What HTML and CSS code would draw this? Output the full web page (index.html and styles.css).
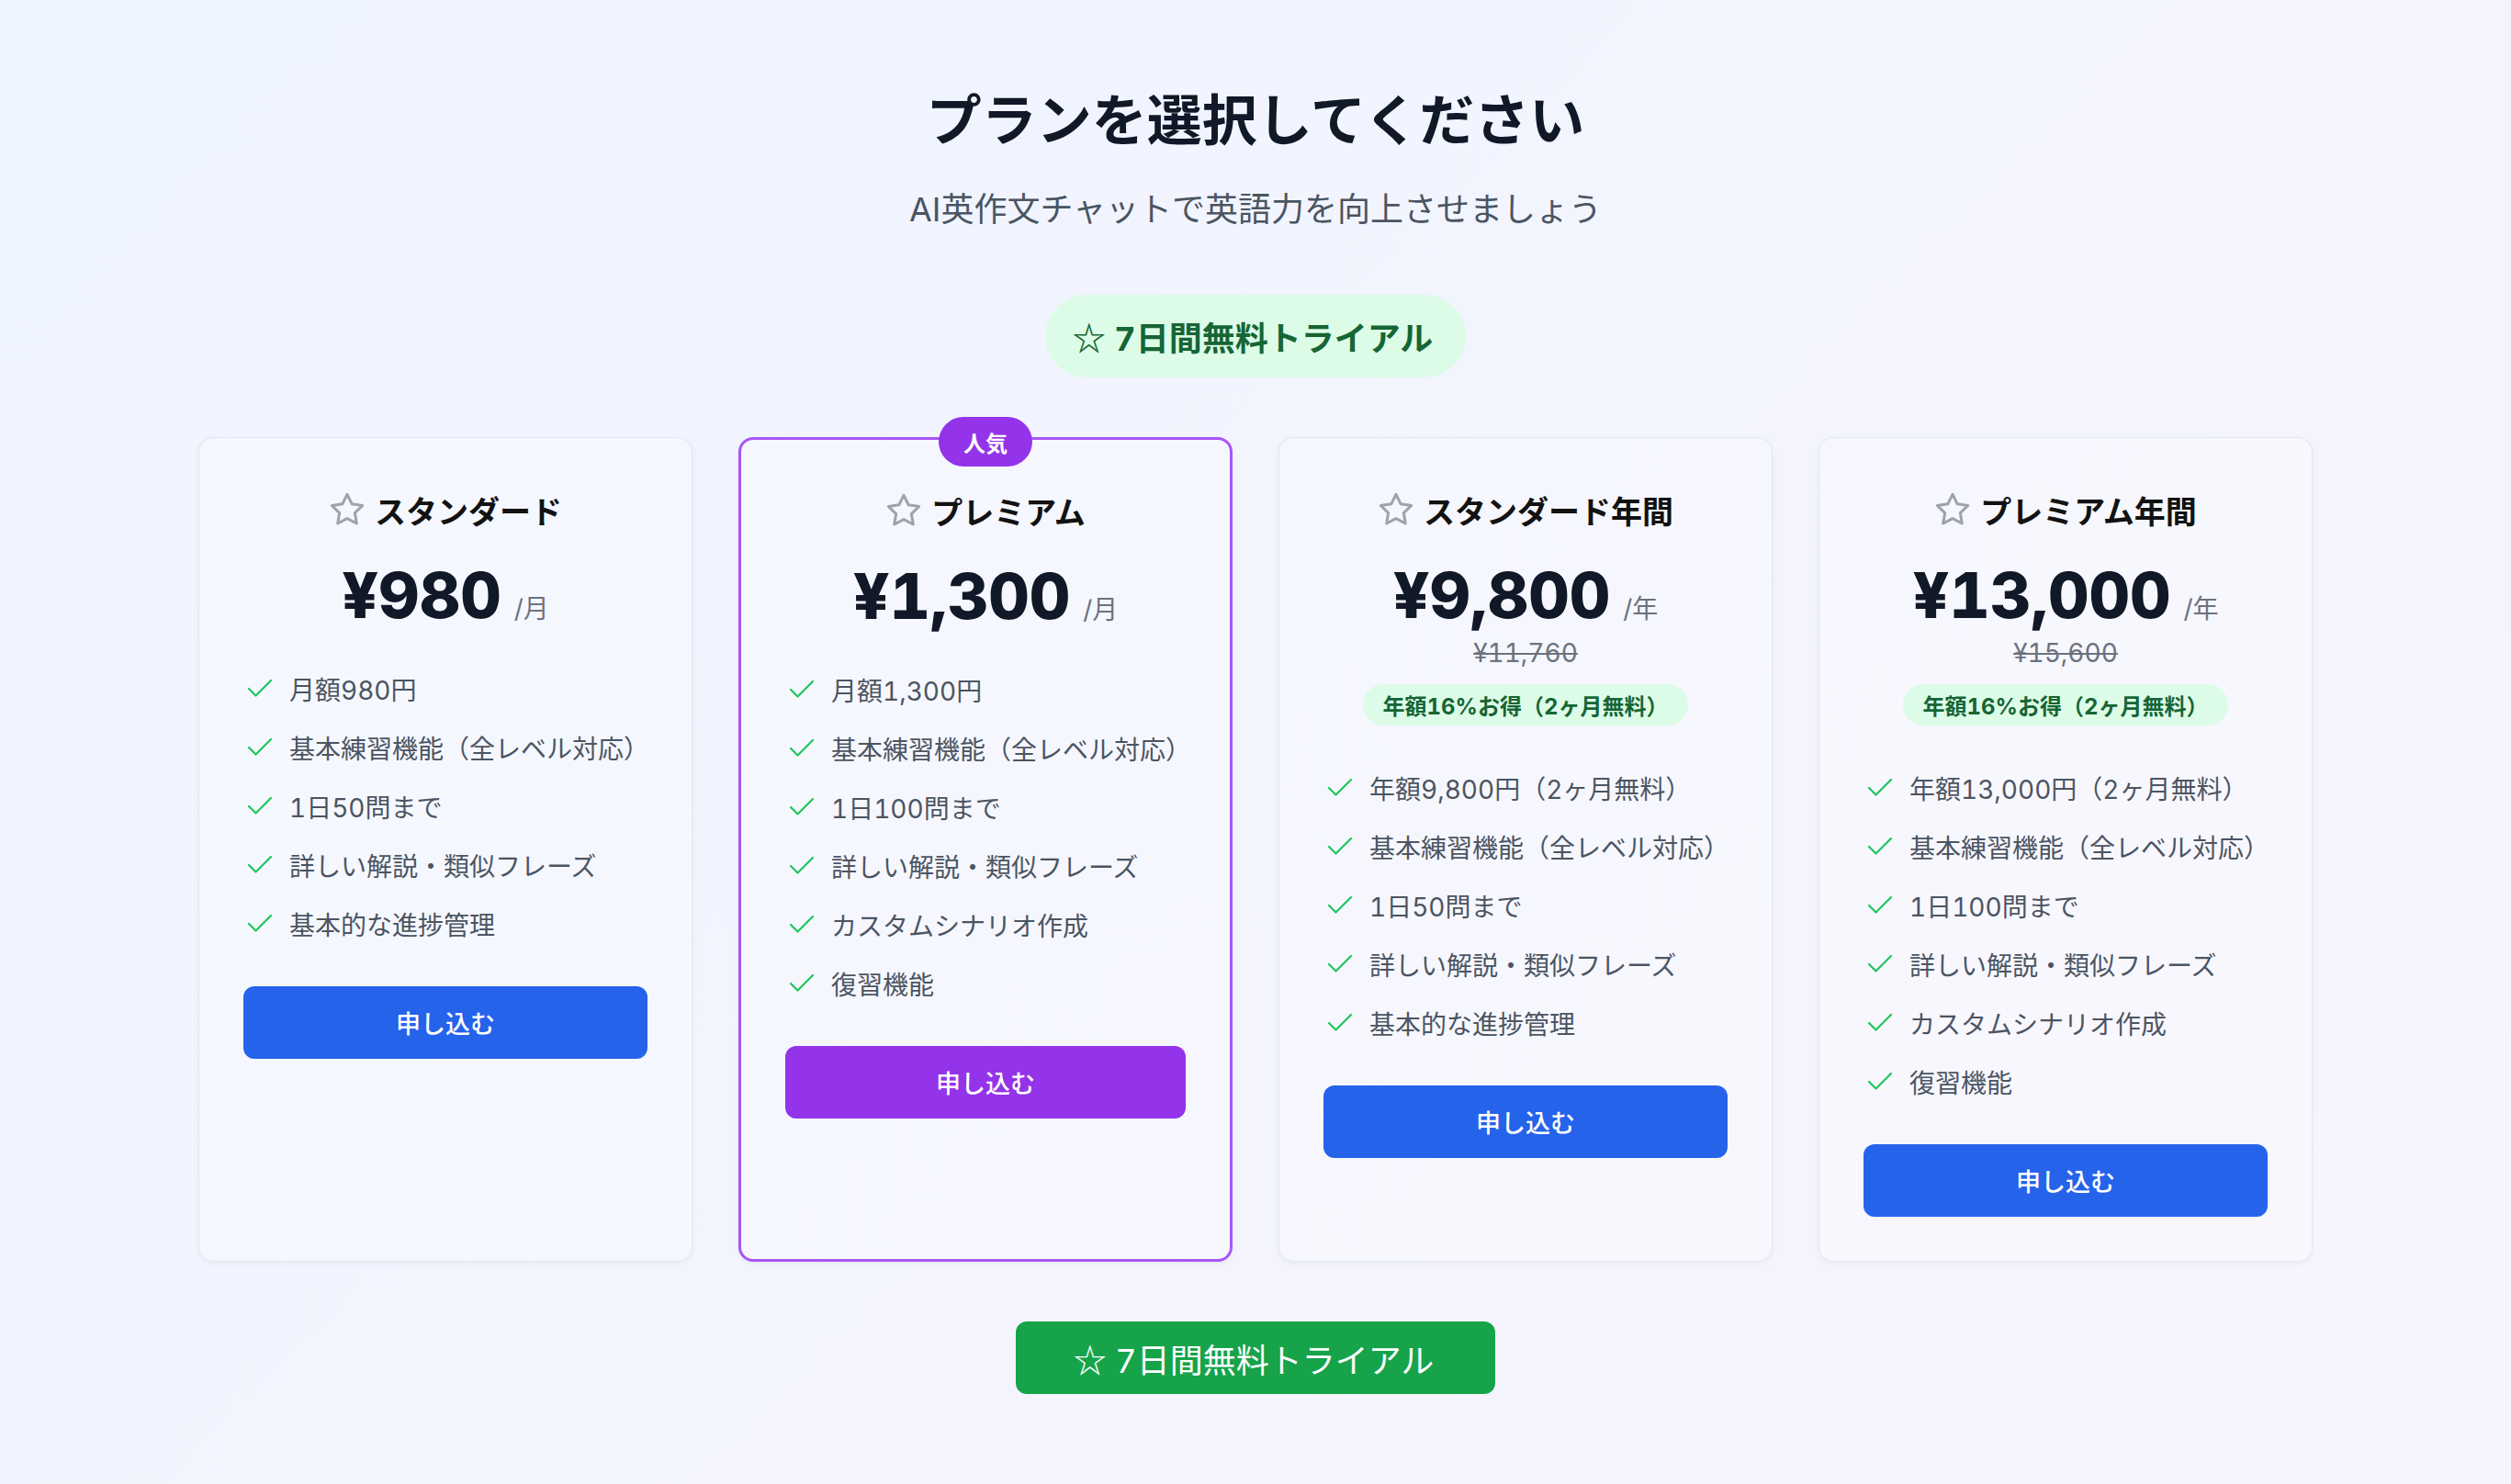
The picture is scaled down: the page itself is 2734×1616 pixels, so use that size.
FILE: index.html
```html
<!DOCTYPE html>
<html lang="ja">
<head>
<meta charset="utf-8">
<title>プランを選択してください</title>
<link rel="stylesheet" href="styles.css">
</head>
<body>
<main class="page">
  <h1 class="title">プランを選択してください</h1>
  <p class="subtitle">AI英作文チャットで英語力を向上させましょう</p>
  <div class="trial-pill"><span class="star-glyph">☆</span> 7日間無料トライアル</div>

  <section class="plans">
    <article class="card">
      <h2 class="plan-name"><svg class="plan-star" viewBox="0 0 24 24"><polygon points="12 2 15.09 8.26 22 9.27 17 14.14 18.18 21.02 12 17.77 5.82 21.02 7 14.14 2 9.27 8.91 8.26"/></svg>スタンダード</h2>
      <div class="price"><span class="amount">¥980</span><span class="unit">/月</span></div>
      <ul class="features">
        <li><svg class="check" viewBox="0 0 24 24"><path d="M20 6 9 17l-5-5"/></svg>月額980円</li>
        <li><svg class="check" viewBox="0 0 24 24"><path d="M20 6 9 17l-5-5"/></svg>基本練習機能（全レベル対応）</li>
        <li><svg class="check" viewBox="0 0 24 24"><path d="M20 6 9 17l-5-5"/></svg>1日50問まで</li>
        <li><svg class="check" viewBox="0 0 24 24"><path d="M20 6 9 17l-5-5"/></svg>詳しい解説・類似フレーズ</li>
        <li><svg class="check" viewBox="0 0 24 24"><path d="M20 6 9 17l-5-5"/></svg>基本的な進捗管理</li>
      </ul>
      <button class="apply apply-blue">申し込む</button>
    </article>

    <article class="card card-popular">
      <span class="popular-badge">人気</span>
      <h2 class="plan-name"><svg class="plan-star" viewBox="0 0 24 24"><polygon points="12 2 15.09 8.26 22 9.27 17 14.14 18.18 21.02 12 17.77 5.82 21.02 7 14.14 2 9.27 8.91 8.26"/></svg>プレミアム</h2>
      <div class="price"><span class="amount">¥1,300</span><span class="unit">/月</span></div>
      <ul class="features">
        <li><svg class="check" viewBox="0 0 24 24"><path d="M20 6 9 17l-5-5"/></svg>月額1,300円</li>
        <li><svg class="check" viewBox="0 0 24 24"><path d="M20 6 9 17l-5-5"/></svg>基本練習機能（全レベル対応）</li>
        <li><svg class="check" viewBox="0 0 24 24"><path d="M20 6 9 17l-5-5"/></svg>1日100問まで</li>
        <li><svg class="check" viewBox="0 0 24 24"><path d="M20 6 9 17l-5-5"/></svg>詳しい解説・類似フレーズ</li>
        <li><svg class="check" viewBox="0 0 24 24"><path d="M20 6 9 17l-5-5"/></svg>カスタムシナリオ作成</li>
        <li><svg class="check" viewBox="0 0 24 24"><path d="M20 6 9 17l-5-5"/></svg>復習機能</li>
      </ul>
      <button class="apply apply-purple">申し込む</button>
    </article>

    <article class="card">
      <h2 class="plan-name"><svg class="plan-star" viewBox="0 0 24 24"><polygon points="12 2 15.09 8.26 22 9.27 17 14.14 18.18 21.02 12 17.77 5.82 21.02 7 14.14 2 9.27 8.91 8.26"/></svg>スタンダード年間</h2>
      <div class="price"><span class="amount">¥9,800</span><span class="unit">/年</span></div>
      <div class="old-price">¥11,760</div>
      <div class="save-row"><span class="save-badge">年額16%お得（2ヶ月無料）</span></div>
      <ul class="features">
        <li><svg class="check" viewBox="0 0 24 24"><path d="M20 6 9 17l-5-5"/></svg>年額9,800円（2ヶ月無料）</li>
        <li><svg class="check" viewBox="0 0 24 24"><path d="M20 6 9 17l-5-5"/></svg>基本練習機能（全レベル対応）</li>
        <li><svg class="check" viewBox="0 0 24 24"><path d="M20 6 9 17l-5-5"/></svg>1日50問まで</li>
        <li><svg class="check" viewBox="0 0 24 24"><path d="M20 6 9 17l-5-5"/></svg>詳しい解説・類似フレーズ</li>
        <li><svg class="check" viewBox="0 0 24 24"><path d="M20 6 9 17l-5-5"/></svg>基本的な進捗管理</li>
      </ul>
      <button class="apply apply-blue">申し込む</button>
    </article>

    <article class="card">
      <h2 class="plan-name"><svg class="plan-star" viewBox="0 0 24 24"><polygon points="12 2 15.09 8.26 22 9.27 17 14.14 18.18 21.02 12 17.77 5.82 21.02 7 14.14 2 9.27 8.91 8.26"/></svg>プレミアム年間</h2>
      <div class="price"><span class="amount">¥13,000</span><span class="unit">/年</span></div>
      <div class="old-price">¥15,600</div>
      <div class="save-row"><span class="save-badge">年額16%お得（2ヶ月無料）</span></div>
      <ul class="features">
        <li><svg class="check" viewBox="0 0 24 24"><path d="M20 6 9 17l-5-5"/></svg>年額13,000円（2ヶ月無料）</li>
        <li><svg class="check" viewBox="0 0 24 24"><path d="M20 6 9 17l-5-5"/></svg>基本練習機能（全レベル対応）</li>
        <li><svg class="check" viewBox="0 0 24 24"><path d="M20 6 9 17l-5-5"/></svg>1日100問まで</li>
        <li><svg class="check" viewBox="0 0 24 24"><path d="M20 6 9 17l-5-5"/></svg>詳しい解説・類似フレーズ</li>
        <li><svg class="check" viewBox="0 0 24 24"><path d="M20 6 9 17l-5-5"/></svg>カスタムシナリオ作成</li>
        <li><svg class="check" viewBox="0 0 24 24"><path d="M20 6 9 17l-5-5"/></svg>復習機能</li>
      </ul>
      <button class="apply apply-blue">申し込む</button>
    </article>
  </section>

  <button class="trial-button"><span class="star-glyph">☆</span> 7日間無料トライアル</button>
</main>
</body>
</html>
```

FILE: styles.css
```css
* { box-sizing: border-box; }

html, body {
  margin: 0;
  padding: 0;
}

body {
  min-height: 100vh;
  background: linear-gradient(135deg, #eff5ff 0%, #f3f4fe 55%, #f7f4fe 100%);
  font-family: Inter, "Noto Sans CJK JP", "Noto Sans", sans-serif;
  font-feature-settings: "tnum" 1;
  color: #111827;
}

.page {
  display: flex;
  flex-direction: column;
  align-items: center;
  padding: 95px 0 80px;
}

.title {
  margin: 0;
  font-size: 60px;
  line-height: 72px;
  font-weight: 700;
  color: #111827;
}

.subtitle {
  margin: 34px 0 0;
  font-size: 36px;
  line-height: 54px;
  color: #4b5563;
}

.trial-pill {
  margin-top: 66px;
  height: 90px;
  padding: 0 36px 0 30px;
  display: flex;
  align-items: center;
  border-radius: 45px;
  background: #dcfce7;
  color: #166534;
  font-size: 36px;
  font-weight: 700;
  white-space: pre;
}

.star-glyph {
  font-family: "Noto Sans CJK JP", sans-serif;
}

.plans {
  margin-top: 65px;
  width: 2302px;
  display: grid;
  grid-template-columns: repeat(4, 1fr);
  gap: 50px;
}

.card {
  position: relative;
  display: flex;
  flex-direction: column;
  align-items: stretch;
  padding: 48px 48px 48px;
  background: rgba(255, 255, 255, 0.3);
  border: 1.5px solid #e3e6ee;
  border-radius: 16px;
  box-shadow: 0 2px 6px rgba(30, 41, 59, 0.05);
}

.card-popular {
  border: 3px solid #a855f7;
  padding-top: 47px;
}

.popular-badge {
  position: absolute;
  top: -25px;
  left: 50%;
  transform: translateX(-50%);
  height: 54px;
  padding: 0 27px;
  display: flex;
  align-items: center;
  border-radius: 27px;
  background: #9333ea;
  color: #ffffff;
  font-size: 24px;
  font-weight: 700;
}

.plan-name {
  margin: 0;
  height: 60px;
  display: flex;
  align-items: center;
  justify-content: center;
  font-size: 34px;
  font-weight: 700;
  color: #121212;
}

.plan-star {
  width: 40px;
  height: 40px;
  margin-right: 10px;
  fill: none;
  stroke: #9ca3af;
  stroke-width: 1.8;
  stroke-linejoin: round;
}

.price {
  margin-top: 29px;
  display: flex;
  justify-content: center;
  align-items: baseline;
}

.amount {
  font-size: 69px;
  line-height: 68px;
  font-weight: 800;
  color: #111827;
}

.unit {
  margin-left: 14px;
  font-size: 28px;
  color: #6b7280;
}

.old-price {
  margin-top: 10px;
  text-align: center;
  font-size: 28px;
  line-height: 39px;
  color: #6b7280;
  text-decoration: line-through;
}

.save-row {
  margin-top: 14px;
  display: flex;
  justify-content: center;
}

.save-badge {
  height: 45px;
  padding: 0 22px;
  display: flex;
  align-items: center;
  border-radius: 23px;
  background: #dcfce7;
  color: #166534;
  font-size: 24px;
  font-weight: 700;
}

.features {
  list-style: none;
  margin: 36px 0 0;
  padding: 0;
}

.features li {
  height: 64px;
  display: flex;
  align-items: center;
  font-size: 28px;
  color: #4b5563;
}

.check {
  width: 36px;
  height: 36px;
  margin-right: 14px;
  flex: none;
  fill: none;
  stroke: #22c55e;
  stroke-width: 1.5;
  stroke-linecap: round;
  stroke-linejoin: round;
}

.apply {
  margin-top: 36px;
  height: 79px;
  width: 100%;
  border: none;
  border-radius: 12px;
  color: #ffffff;
  font-family: Inter, "Noto Sans CJK JP", sans-serif;
  font-size: 27px;
  font-weight: 500;
}

.apply-blue { background: #2563eb; }
.apply-purple { background: #9333ea; }

.trial-button {
  margin-top: 65px;
  height: 79px;
  padding: 0 67px 0 63px;
  border: none;
  border-radius: 12px;
  background: #16a34a;
  color: #ffffff;
  font-family: Inter, "Noto Sans CJK JP", sans-serif;
  font-feature-settings: "tnum" 1;
  font-size: 36px;
  font-weight: 400;
  white-space: pre;
}
```
